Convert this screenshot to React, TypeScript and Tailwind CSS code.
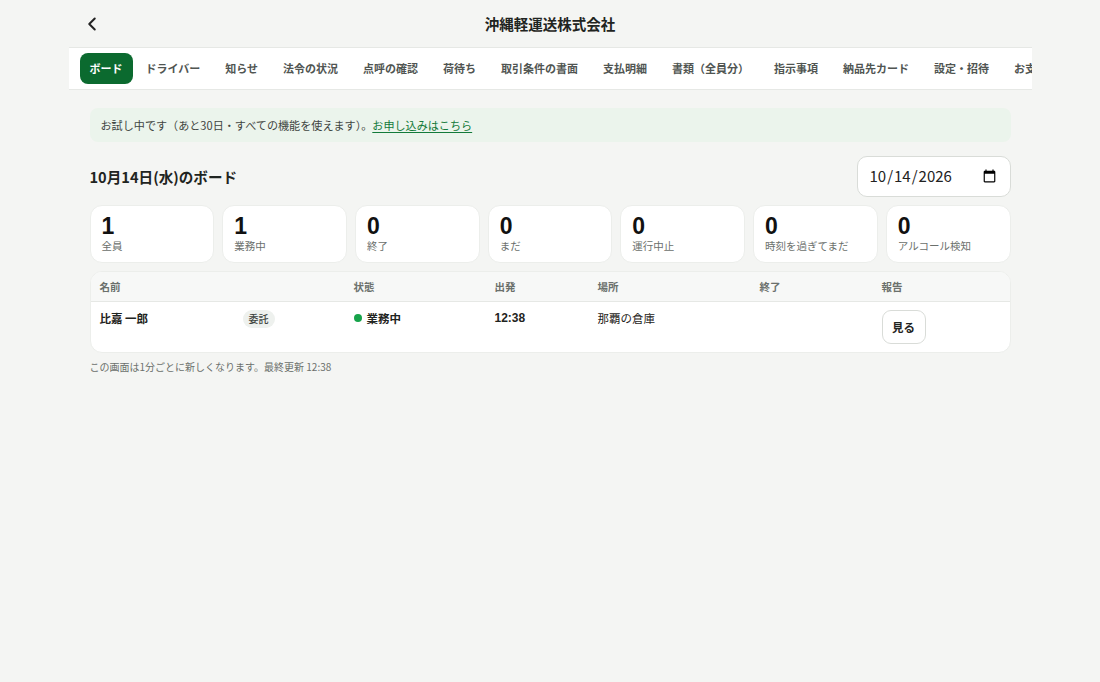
import { ChevronLeft } from "lucide-react";

const TABS = [
  "ボード",
  "ドライバー",
  "知らせ",
  "法令の状況",
  "点呼の確認",
  "荷待ち",
  "取引条件の書面",
  "支払明細",
  "書類（全員分）",
  "指示事項",
  "納品先カード",
  "設定・招待",
  "お支払い",
];

const STATS = [
  { value: 1, label: "全員" },
  { value: 1, label: "業務中" },
  { value: 0, label: "終了" },
  { value: 0, label: "まだ" },
  { value: 0, label: "運行中止" },
  { value: 0, label: "時刻を過ぎてまだ" },
  { value: 0, label: "アルコール検知" },
];

const COLS = "grid grid-cols-[143px_111px_141px_103px_162px_122px_1fr] px-[9px]";

export default function App() {
  return (
    <div className="min-h-screen bg-[#f4f5f3] font-['Noto_Sans_CJK_JP',sans-serif] text-[#1f2421]">
      <div className="mx-auto w-[963px]">
        {/* Header */}
        <header className="relative flex h-[47px] items-center justify-center">
          <button className="absolute left-[12px] top-[13px] text-[#222]" aria-label="戻る">
            <ChevronLeft className="h-[22px] w-[22px]" strokeWidth={2.2} />
          </button>
          <h1 className="text-[14.5px] font-bold">沖縄軽運送株式会社</h1>
        </header>

        {/* Tabs */}
        <nav className="flex h-[43px] items-center gap-[1px] overflow-hidden border-y border-[#e6e8e5] bg-white pl-[11px]">
          {TABS.map((t, i) => (
            <span
              key={t}
              className={
                i === 0
                  ? "shrink-0 whitespace-nowrap rounded-[8px] bg-[#0b6a2f] px-[10px] py-[7px] text-[11px] font-bold text-white"
                  : "shrink-0 whitespace-nowrap px-[12px] py-[7px] text-[11px] font-bold text-[#505552]"
              }
            >
              {t}
            </span>
          ))}
        </nav>

        <main className="px-[21px] pt-[18px]">
          {/* Trial banner */}
          <div className="rounded-[8px] bg-[#ebf4ec] px-[11px] py-[8px] text-[11.1px] leading-[18px] text-[#3f4541]">
            お試し中です（あと30日・すべての機能を使えます）。
            <a href="#" className="text-[#137a3a] underline underline-offset-2">
              お申し込みはこちら
            </a>
          </div>

          {/* Date row */}
          <div className="mt-[14px] flex items-center justify-between">
            <h2 className="text-[14.6px] font-bold">10月14日(水)のボード</h2>
            <input
              type="date"
              defaultValue="2026-10-14"
              className="h-[41px] w-[154px] rounded-[10px] border border-[#d9dcd8] bg-white px-[11px] text-[15px] text-[#222]"
            />
          </div>

          {/* Stats */}
          <div className="mt-[8px] grid grid-cols-7 gap-[8px]">
            {STATS.map((s) => (
              <div key={s.label} className="h-[58px] rounded-[12px] border border-[#eceeeb] bg-white px-[11px] pt-[7px]">
                <div className="font-['Liberation_Sans',sans-serif] text-[23px] font-bold leading-[26px] text-[#111]">
                  {s.value}
                </div>
                <div className="text-[10.5px] leading-[14px] text-[#6b706c]">{s.label}</div>
              </div>
            ))}
          </div>

          {/* Table */}
          <div className="mt-[8px] overflow-hidden rounded-[12px] border border-[#eceeeb] bg-white">
            <div className={`${COLS} h-[30px] items-center border-b border-[#e6e8e5] bg-[#f7f8f7] text-[10.5px] font-bold text-[#6b706c]`}>
              <span>名前</span>
              <span />
              <span>状態</span>
              <span>出発</span>
              <span>場所</span>
              <span>終了</span>
              <span>報告</span>
            </div>
            <div className={`${COLS} h-[50px] items-start pt-[8px] text-[11.5px] leading-[16px]`}>
              <span className="font-bold">比嘉 一郎</span>
              <span>
                <span className="inline-block rounded-full bg-[#eef1ee] px-[6px] py-[1px] text-[10px] font-medium leading-[16px] text-[#3f4541]">
                  委託
                </span>
              </span>
              <span className="flex items-center gap-[5px] font-bold">
                <span className="h-[8px] w-[8px] rounded-full bg-[#16a34a]" />
                業務中
              </span>
              <span className="font-['Liberation_Sans',sans-serif] text-[12px] font-bold">12:38</span>
              <span>那覇の倉庫</span>
              <span />
              <span>
                <button className="h-[34px] w-[44px] rounded-[9px] border border-[#d9dcd8] bg-white text-[11.5px] font-bold">
                  見る
                </button>
              </span>
            </div>
          </div>

          <p className="mt-[6px] text-[10px] text-[#6b706c]">この画面は1分ごとに新しくなります。最終更新 12:38</p>
        </main>
      </div>
    </div>
  );
}
